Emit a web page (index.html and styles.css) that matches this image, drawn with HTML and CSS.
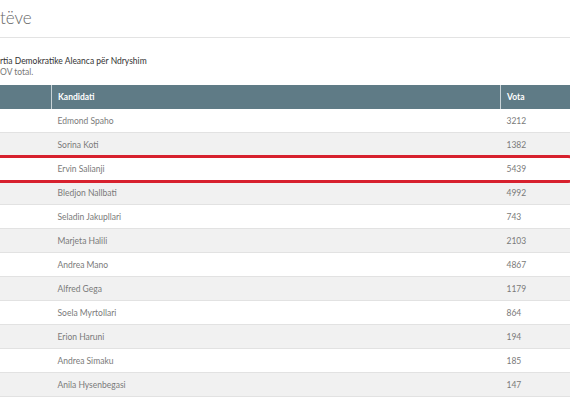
FILE: index.html
```html
<!DOCTYPE html>
<html lang="sq">
<head>
<meta charset="utf-8">
<link rel="stylesheet" href="styles.css">
</head>
<body>
<div class="page">
  <div class="title-bar"><h1 class="title">tëve</h1></div>
  <div class="subhead">
    <div class="party">rtia Demokratike Aleanca për Ndryshim</div>
    <div class="total">OV total.</div>
  </div>
  <div class="table-wrap">
    <table class="results">
      <thead>
        <tr><th class="c-num"></th><th class="c-name">Kandidati</th><th class="c-vote">Vota</th></tr>
      </thead>
      <tbody>
        <tr><td></td><td>Edmond Spaho</td><td>3212</td></tr>
        <tr><td></td><td>Sorina Koti</td><td>1382</td></tr>
        <tr><td></td><td>Ervin Salianji</td><td>5439</td></tr>
        <tr><td></td><td>Bledjon Nallbati</td><td>4992</td></tr>
        <tr><td></td><td>Seladin Jakupllari</td><td>743</td></tr>
        <tr><td></td><td>Marjeta Halili</td><td>2103</td></tr>
        <tr><td></td><td>Andrea Mano</td><td>4867</td></tr>
        <tr><td></td><td>Alfred Gega</td><td>1179</td></tr>
        <tr><td></td><td>Soela Myrtollari</td><td>864</td></tr>
        <tr><td></td><td>Erion Haruni</td><td>194</td></tr>
        <tr><td></td><td>Andrea Simaku</td><td>185</td></tr>
        <tr><td></td><td>Anila Hysenbegasi</td><td>147</td></tr>
      </tbody>
    </table>
    <div class="highlight"></div>
  </div>
</div>
</body>
</html>
```
FILE: styles.css
```css
html, body {
  margin: 0;
  padding: 0;
  background: #ffffff;
  overflow: hidden;
}
.page {
  width: 570px;
  font-family: Lato, "Open Sans", sans-serif;
  color: #666;
}
.title-bar {
  height: 37px;
  border-bottom: 1px solid #e3e3e3;
  display: flex;
  align-items: center;
}
.title {
  margin: 0;
  font-size: 17px;
  font-weight: 300;
  color: #666;
  line-height: 1;
  position: relative;
  top: -1px;
}
.subhead {
  padding-top: 18px;
  height: 29px;
}
.party {
  font-size: 8.5px;
  color: #333;
  font-weight: 400;
  line-height: 11px;
}
.total {
  font-size: 8.5px;
  color: #777;
  line-height: 11px;
}
.table-wrap {
  position: relative;
}
.results {
  width: 570px;
  border-collapse: collapse;
  table-layout: fixed;
  font-size: 8.5px;
}
.c-num { width: 45px; }
.c-vote { width: 63px; }
.results th {
  background: #5f7b86;
  color: #fff;
  font-weight: 700;
  text-align: left;
  height: 24px;
  padding: 0 0 0 6px;
  border-left: 1px solid #c9d3d7;
}
.results th:first-child { border-left: none; }
.results td {
  height: 23px;
  padding: 0 0 0 6px;
  border-bottom: 1px solid #e2e2e2;
  color: #7a7a7a;
}
.results tbody tr:nth-child(even) td {
  background: #f1f1f1;
}
.highlight {
  position: absolute;
  left: -10px;
  top: 70px;
  width: 584px;
  height: 22px;
  border: 3px solid #d7212e;
  border-radius: 0 12px 12px 0;
}
```
